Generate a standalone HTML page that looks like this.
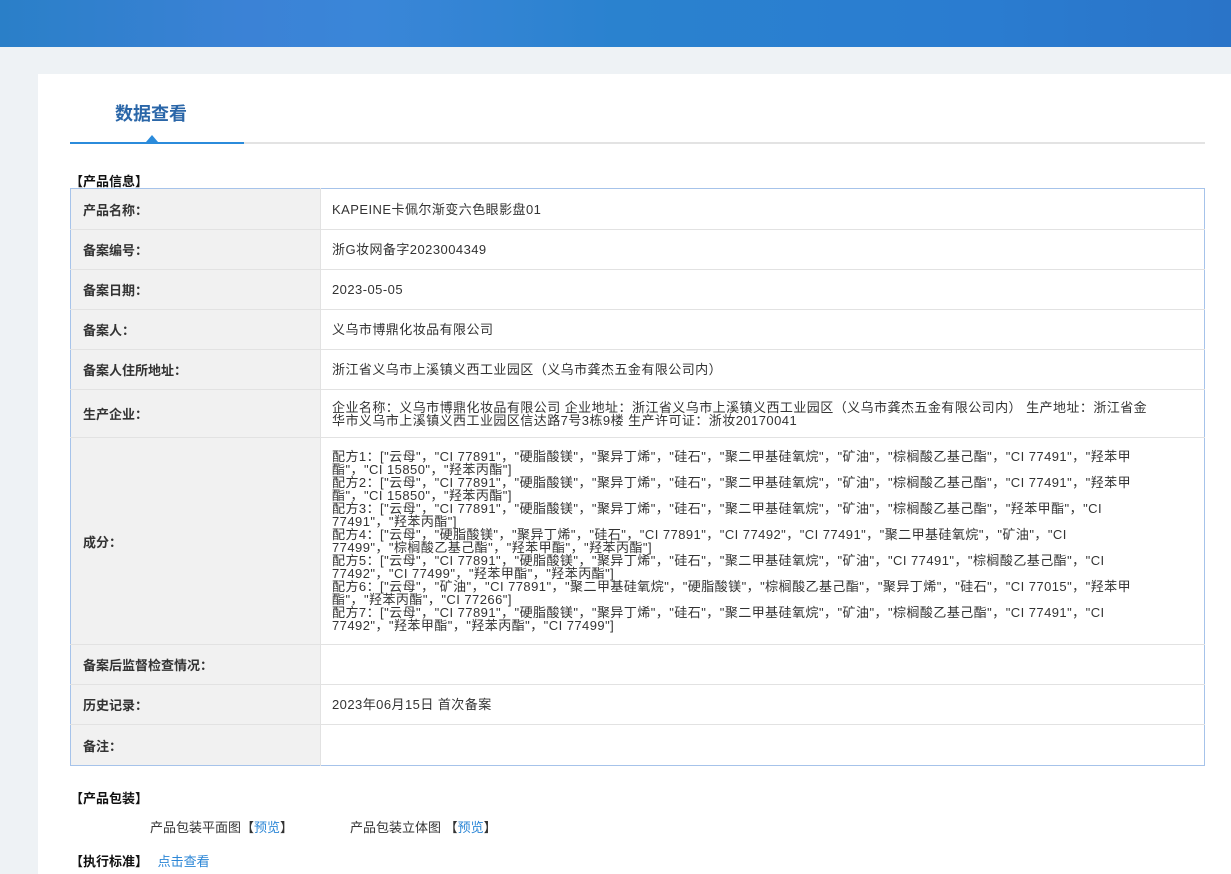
<!DOCTYPE html>
<html><head><meta charset="utf-8"><style>
*{margin:0;padding:0;box-sizing:border-box}
body{width:1231px;height:866px;overflow:hidden;background:#eef2f5;font-family:"Liberation Sans","Noto Sans CJK SC",sans-serif;font-size:13px;color:#333;position:relative}
.top{position:absolute;left:0;top:0;width:1231px;height:47px;background:linear-gradient(90deg,#2a7fc8 0%,#3b82d6 20%,#3a86d8 30%,#2a82cf 50%,#2a7cd0 80%,#2a74c8 100%)}
.panel{position:absolute;left:38px;top:74px;width:1193px;height:800px;background:#fff}
.title{position:absolute;left:115px;top:100px;font-size:18px;font-weight:bold;color:#2a66a8}
.line{position:absolute;left:70px;top:142px;width:1135px;height:2px;background:#e3e3e3}
.line b{position:absolute;left:0;top:0;width:174px;height:2px;background:#2b8bdb}
.tri{position:absolute;left:146px;top:135px;width:0;height:0;border-left:6px solid transparent;border-right:6px solid transparent;border-bottom:7px solid #2b8bdb}
.h{position:absolute;left:70px;font-weight:bold;color:#111}
table{position:absolute;left:70px;top:188px;width:1135px;border-collapse:collapse;border:1px solid #a6c3ea}
td{border-bottom:1px solid #e2e2e2;vertical-align:middle}
td.l{width:250px;background:#f1f1f1;font-weight:bold;padding-left:12px;border-right:1px solid #e2e2e2;color:#333}
td.v{padding:0 40px 0 11px;line-height:13px;letter-spacing:0.45px}
a{color:#2b86d6;text-decoration:none}
</style></head><body>
<div class="top"></div>
<div class="panel"></div>
<div class="title">数据查看</div>
<div class="line"><b></b></div>
<div class="tri"></div>
<div class="h" style="top:171px">【产品信息】</div>
<table>
<tr style="height:41px"><td class="l">产品名称：</td><td class="v">KAPEINE卡佩尔渐变六色眼影盘01</td></tr>
<tr style="height:40px"><td class="l">备案编号：</td><td class="v">浙G妆网备字2023004349</td></tr>
<tr style="height:40px"><td class="l">备案日期：</td><td class="v">2023-05-05</td></tr>
<tr style="height:40px"><td class="l">备案人：</td><td class="v">义乌市博鼎化妆品有限公司</td></tr>
<tr style="height:40px"><td class="l">备案人住所地址：</td><td class="v">浙江省义乌市上溪镇义西工业园区（义乌市龚杰五金有限公司内）</td></tr>
<tr style="height:48px"><td class="l">生产企业：</td><td class="v">企业名称：义乌市博鼎化妆品有限公司 企业地址：浙江省义乌市上溪镇义西工业园区（义乌市龚杰五金有限公司内） 生产地址：浙江省金<br>华市义乌市上溪镇义西工业园区信达路7号3栋9楼 生产许可证：浙妆20170041</td></tr>
<tr style="height:207px"><td class="l">成分：</td><td class="v">配方1：["云母"，"CI 77891"，"硬脂酸镁"，"聚异丁烯"，"硅石"，"聚二甲基硅氧烷"，"矿油"，"棕榈酸乙基己酯"，"CI 77491"，"羟苯甲<br>酯"，"CI 15850"，"羟苯丙酯"]<br>配方2：["云母"，"CI 77891"，"硬脂酸镁"，"聚异丁烯"，"硅石"，"聚二甲基硅氧烷"，"矿油"，"棕榈酸乙基己酯"，"CI 77491"，"羟苯甲<br>酯"，"CI 15850"，"羟苯丙酯"]<br>配方3：["云母"，"CI 77891"，"硬脂酸镁"，"聚异丁烯"，"硅石"，"聚二甲基硅氧烷"，"矿油"，"棕榈酸乙基己酯"，"羟苯甲酯"，"CI<br>77491"，"羟苯丙酯"]<br>配方4：["云母"，"硬脂酸镁"，"聚异丁烯"，"硅石"，"CI 77891"，"CI 77492"，"CI 77491"，"聚二甲基硅氧烷"，"矿油"，"CI<br>77499"，"棕榈酸乙基己酯"，"羟苯甲酯"，"羟苯丙酯"]<br>配方5：["云母"，"CI 77891"，"硬脂酸镁"，"聚异丁烯"，"硅石"，"聚二甲基硅氧烷"，"矿油"，"CI 77491"，"棕榈酸乙基己酯"，"CI<br>77492"，"CI 77499"，"羟苯甲酯"，"羟苯丙酯"]<br>配方6：["云母"，"矿油"，"CI 77891"，"聚二甲基硅氧烷"，"硬脂酸镁"，"棕榈酸乙基己酯"，"聚异丁烯"，"硅石"，"CI 77015"，"羟苯甲<br>酯"，"羟苯丙酯"，"CI 77266"]<br>配方7：["云母"，"CI 77891"，"硬脂酸镁"，"聚异丁烯"，"硅石"，"聚二甲基硅氧烷"，"矿油"，"棕榈酸乙基己酯"，"CI 77491"，"CI<br>77492"，"羟苯甲酯"，"羟苯丙酯"，"CI 77499"]</td></tr>
<tr style="height:40px"><td class="l">备案后监督检查情况：</td><td class="v"></td></tr>
<tr style="height:40px"><td class="l">历史记录：</td><td class="v">2023年06月15日 首次备案</td></tr>
<tr style="height:41px"><td class="l" style="border-bottom:0">备注：</td><td class="v" style="border-bottom:0"></td></tr>
</table>
<div class="h" style="top:788px">【产品包装】</div>
<div style="position:absolute;left:150px;top:817px">产品包装平面图【<a>预览</a>】</div>
<div style="position:absolute;left:350px;top:817px">产品包装立体图 【<a>预览</a>】</div>
<div class="h" style="top:851px">【执行标准】 <a style="font-weight:normal;margin-left:6px">点击查看</a></div>
</body></html>
